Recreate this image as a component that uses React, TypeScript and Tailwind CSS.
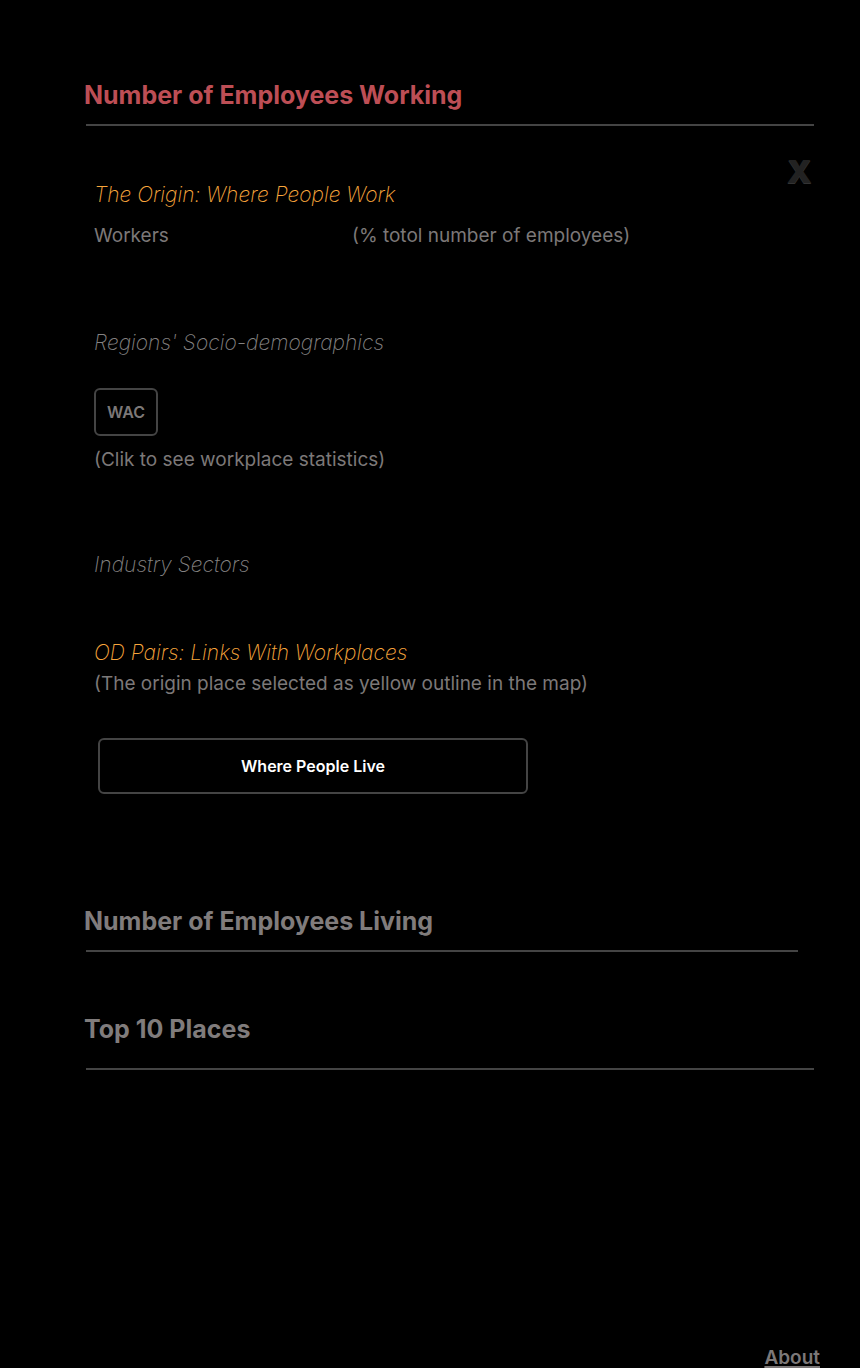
import type { ReactNode } from "react";

function SectionHeading({ children, active = false }: { children: ReactNode; active?: boolean }) {
  return (
    <h2 className={`text-[25px] leading-8 font-bold ${active ? "text-[#bd4e55]" : "text-[#807c7c]"}`}>
      {children}
    </h2>
  );
}

function Subheading({ children, accent = false }: { children: ReactNode; accent?: boolean }) {
  return (
    <h3 className={`text-[21px] leading-[34px] font-extralight italic ${accent ? "text-[#f8a63c]" : "text-[#848282]"}`}>
      {children}
    </h3>
  );
}

export default function App() {
  return (
    <div className="flex min-h-screen flex-col bg-black pt-[79px] pr-10 pl-[84px] font-['Inter',sans-serif] text-[19px] leading-7 text-[#7c7878]">
      <main className="grow">
        <section>
          <SectionHeading active>Number of Employees Working</SectionHeading>
          <hr className="mt-[13px] mr-1.5 ml-0.5 border-t-2 border-[#444]" />

          <div className="mt-8 flex items-start justify-between pr-2 pl-[10px]">
            <div className="min-w-0 grow pt-5">
              <Subheading accent>The Origin: Where People Work</Subheading>
              <div className="mt-[10px] flex flex-wrap">
                <span className="w-[258px]">Workers</span>
                <span>(% totol number of employees)</span>
              </div>
            </div>
            <button
              type="button"
              aria-label="Close"
              className="text-[32px] leading-7 font-black text-[#222] [text-shadow:0_1px_0_#333]"
            >
              X
            </button>
          </div>

          <div className="mt-19 pl-[10px]">
            <Subheading>Regions' Socio-demographics</Subheading>
            <button
              type="button"
              className="mt-7 block h-12 w-16 rounded-md border-2 border-[#444] text-base font-semibold"
            >
              WAC
            </button>
            <p className="mt-[10px]">(Clik to see workplace statistics)</p>
          </div>

          <div className="mt-[74px] pl-[10px]">
            <Subheading>Industry Sectors</Subheading>
          </div>

          <div className="mt-[54px] pl-[10px]">
            <Subheading accent>OD Pairs: Links With Workplaces</Subheading>
            <p>(The origin place selected as yellow outline in the map)</p>
            <button
              type="button"
              className="mt-10 ml-1 block h-14 w-full max-w-[430px] rounded-md border-2 border-[#444] text-base font-semibold text-white"
            >
              Where People Live
            </button>
          </div>
        </section>

        <section className="mt-[111px]">
          <SectionHeading>Number of Employees Living</SectionHeading>
          <hr className="mt-[13px] mr-[22px] ml-0.5 border-t-2 border-[#444]" />
        </section>

        <section className="mt-[61px]">
          <SectionHeading>Top 10 Places</SectionHeading>
          <hr className="mt-[23px] mr-1.5 ml-0.5 border-t-2 border-[#444]" />
        </section>
      </main>

      <footer className="flex justify-end leading-5">
        <a href="#about" className="font-semibold underline decoration-2 underline-offset-2">
          About
        </a>
      </footer>
    </div>
  );
}
